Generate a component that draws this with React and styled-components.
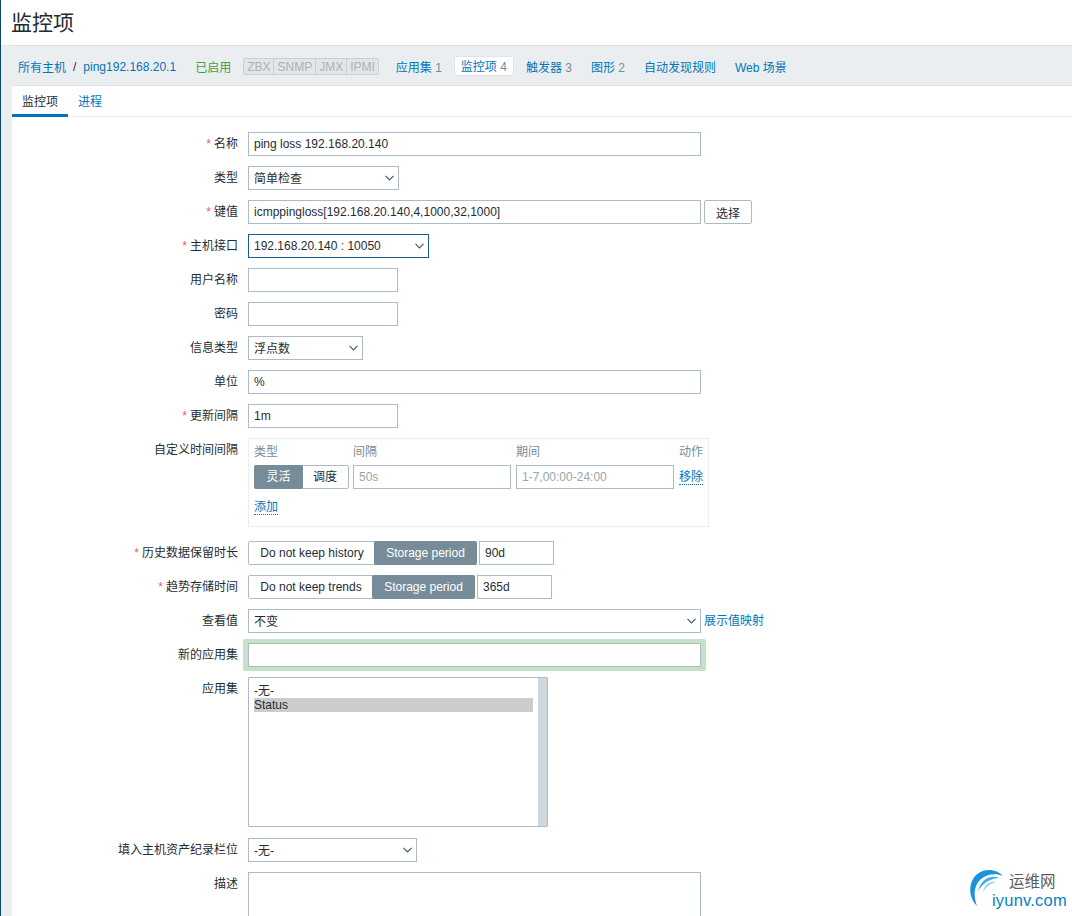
import React from "react";
import styled, { createGlobalStyle } from "styled-components";

const Global = createGlobalStyle`
  html, body { margin: 0; padding: 0; background: #fff; }
  body { font-family: "Liberation Sans", "Noto Sans CJK SC", sans-serif; font-size: 12px; color: #1f2c33; }
  * { box-sizing: border-box; }
`;

const Page = styled.div`
  position: relative;
  width: 1072px;
  height: 916px;
  overflow: hidden;
  background: #ebeef0;
  border-left: 1px solid #0a466a;
  display: flex;
  flex-direction: column;
`;
const Header = styled.header`
  height: 46px;
  flex: none;
  background: #fff;
  border-bottom: 1px solid #dfe4e7;
  padding: 10px 0 0 10px;
`;
const Title = styled.h1`
  margin: 0;
  font-size: 21px;
  font-weight: 400;
  line-height: 26px;
  color: #1f2c33;
`;
const NavBar = styled.nav`
  height: 39px;
  flex: none;
  display: flex;
  align-items: center;
  padding: 2px 0 0 17px;
  white-space: nowrap;
`;
const NavLink = styled.a`
  color: #0275b8;
`;
const Sep = styled.span`
  color: #1f2c33;
  margin: 0 7px;
`;
const Enabled = styled.span`
  color: #429e47;
  margin-left: 19px;
`;
const Badges = styled.div`
  display: flex;
  height: 17px;
  margin-left: 12px;
  border: 1px solid #c9d0d4;
  border-radius: 2px;
  background: #e2e6e8;
`;
const Badge = styled.span`
  padding: 0 3px;
  line-height: 17px;
  color: #a9b2b7;
  border-left: ${(p) => (p.$first ? "none" : "1px solid #c9d0d4")};
`;
const Count = styled.span`
  color: #768d99;
`;
const NavItem = styled.span`
  margin-left: ${(p) => p.$ml}px;
  color: #0275b8;
  ${(p) =>
    p.$active &&
    `background:#fff;border:1px solid #dfe4e7;border-radius:2px;height:20px;margin-top:-1px;line-height:20px;padding:0 6px;`}
`;
const Card = styled.main`
  flex: 1;
  margin-left: 11px;
  background: #fff;
  border-top: 1px solid #dfe4e7;
  min-height: 0;
`;
const Tabs = styled.div`
  display: flex;
  height: 31px;
  border-bottom: 1px solid #ebeef0;
`;
const Tab = styled.a`
  height: 31px;
  padding: 6px 10px 0;
  color: ${(p) => (p.$active ? "#1f2c33" : "#0275b8")};
  border-bottom: ${(p) => (p.$active ? "3px solid #0275b8" : "none")};
`;
const Form = styled.form`
  display: flex;
  flex-direction: column;
  gap: 10px;
  padding-top: 15px;
`;
const Row = styled.div`
  display: grid;
  grid-template-columns: 226px 1fr;
  column-gap: 10px;
  min-height: 24px;
`;
const Label = styled.label`
  text-align: right;
  line-height: 24px;
  color: #1f2c33;
  white-space: nowrap;
`;
const Star = styled.span`
  color: #e8635f;
  margin-right: 3px;
`;
const Control = styled.div`
  display: flex;
  align-items: flex-start;
  gap: ${(p) => p.$gap ?? 3}px;
`;
const Input = styled.div`
  width: ${(p) => p.$w}px;
  height: ${(p) => p.$h || 24}px;
  flex: none;
  border: 1px solid #acbbc7;
  background: #fff;
  padding: 0 5px;
  line-height: 22px;
  color: ${(p) => (p.$muted ? "#9aa5ab" : "#1f2c33")};
`;
const Select = styled.div`
  width: ${(p) => p.$w}px;
  height: 24px;
  flex: none;
  border: 1px solid ${(p) => (p.$focus ? "#1b5f8e" : "#acbbc7")};
  background: #fff;
  padding: 0 5px;
  line-height: 22px;
  display: flex;
  justify-content: space-between;
  align-items: center;
`;
const SelectText = styled.span`
  padding-top: ${(p) => (p.$low ? 2 : 0)}px;
`;
const Chevron = styled.svg`
  width: 9px;
  height: 6px;
  margin-right: -1px;
  fill: none;
  stroke: #4a5a62;
  stroke-width: 1.2;
`;
const Button = styled.button`
  height: 24px;
  width: 48px;
  font: inherit;
  color: #1f2c33;
  background: #fff;
  border: 1px solid #acbbc7;
  border-radius: 2px;
  padding: 0;
`;
const Toggle = styled.div`
  display: flex;
  flex: none;
  justify-self: start;
  height: 24px;
  border: 1px solid #acbbc7;
  border-radius: 2px;
  background: #fff;
`;
const ToggleOption = styled.span`
  width: ${(p) => p.$w}px;
  margin: ${(p) => (p.$on ? "-1px" : "0")};
  line-height: ${(p) => (p.$on ? 24 : 22)}px;
  text-align: center;
  background: ${(p) => (p.$on ? "#768d99" : "transparent")};
  color: ${(p) => (p.$on ? "#fff" : "#1f2c33")};
  border-radius: ${(p) => (p.$on ? "2px" : "0")};
`;
const IntervalBox = styled.div`
  width: 461px;
  height: 89px;
  margin-bottom: 4px;
  border: 1px solid #ebeef0;
  padding: 5px;
`;
const IntervalGrid = styled.div`
  display: grid;
  grid-template-columns: 94px 158px 158px 24px;
  column-gap: 5px;
  row-gap: 4px;
  align-items: center;
`;
const ColHead = styled.span`
  color: #768d99;
  line-height: 17px;
`;
const DottedLink = styled.a`
  color: #0275b8;
  border-bottom: 1px dotted #0275b8;
  line-height: 14px;
  display: inline-block;
`;
const AddRow = styled.div`
  margin-top: 11px;
`;
const MapLink = styled.a`
  color: #0275b8;
  line-height: 24px;
`;
const Highlight = styled.div`
  width: 463px;
  height: 32px;
  margin: -4px 0 -4px -5px;
  padding: 4px 5px;
  background: #c5e1c6;
  border-radius: 2px;
`;
const ListBox = styled.div`
  position: relative;
  width: 300px;
  height: 150px;
  margin-bottom: 1px;
  border: 1px solid #acbbc7;
  border-radius: 1px;
  padding: 5px 14px 0 5px;
  background: #fff;
`;
const ListScroll = styled.div`
  position: absolute;
  top: 0;
  right: 0;
  bottom: 0;
  width: 9px;
  background: #cfd8de;
`;
const ListOption = styled.div`
  height: 14px;
  line-height: 14px;
  margin-top: ${(p) => (p.$first ? "1px" : "0")};
  background: ${(p) => (p.$sel ? "#cccccc" : "transparent")};
`;
const Watermark = styled.div`
  position: absolute;
  left: 967px;
  top: 868px;
  width: 105px;
  height: 48px;
`;
const WatermarkIcon = styled.svg`
  position: absolute;
  left: 0;
  top: 0;
  width: 44px;
  height: 44px;
`;
const WatermarkCn = styled.span`
  position: absolute;
  left: 41px;
  top: 5px;
  font-size: 15.5px;
  line-height: 18px;
  color: #5c5c5c;
`;
const WatermarkEn = styled.span`
  position: absolute;
  left: 24px;
  top: 23px;
  font-size: 16.5px;
  line-height: 18px;
  letter-spacing: 0.2px;
  color: #0a7fc4;
`;

const Sel = ({ w, focus, low, children }) => (
  <Select $w={w} $focus={focus}>
    <SelectText $low={low}>{children}</SelectText>
    <Chevron viewBox="0 0 9 6">
      <path d="M0.5 0.8 L4.5 4.8 L8.5 0.8" />
    </Chevron>
  </Select>
);

const Field = ({ label, req, children, gap }) => (
  <Row>
    <Label>
      {req && <Star>*</Star>}
      {label}
    </Label>
    <Control $gap={gap}>{children}</Control>
  </Row>
);

export default function App() {
  return (
    <Page>
      <Global />
      <Header>
        <Title>监控项</Title>
      </Header>
      <NavBar>
        <NavLink>所有主机</NavLink>
        <Sep>/</Sep>
        <NavLink>ping192.168.20.1</NavLink>
        <Enabled>已启用</Enabled>
        <Badges>
          <Badge $first>ZBX</Badge>
          <Badge>SNMP</Badge>
          <Badge>JMX</Badge>
          <Badge>IPMI</Badge>
        </Badges>
        <NavItem $ml={17}>
          应用集 <Count>1</Count>
        </NavItem>
        <NavItem $ml={12} $active>
          监控项 <Count>4</Count>
        </NavItem>
        <NavItem $ml={12}>
          触发器 <Count>3</Count>
        </NavItem>
        <NavItem $ml={19}>
          图形 <Count>2</Count>
        </NavItem>
        <NavItem $ml={19}>自动发现规则</NavItem>
        <NavItem $ml={19}>Web 场景</NavItem>
      </NavBar>
      <Card>
        <Tabs>
          <Tab $active>监控项</Tab>
          <Tab>进程</Tab>
        </Tabs>
        <Form>
          <Field label="名称" req>
            <Input $w={453}>ping loss 192.168.20.140</Input>
          </Field>
          <Field label="类型">
            <Sel w={151} low>简单检查</Sel>
          </Field>
          <Field label="键值" req>
            <Input $w={453}>icmppingloss[192.168.20.140,4,1000,32,1000]</Input>
            <Button type="button">选择</Button>
          </Field>
          <Field label="主机接口" req>
            <Sel w={181} focus>
              192.168.20.140 : 10050
            </Sel>
          </Field>
          <Field label="用户名称">
            <Input $w={150} />
          </Field>
          <Field label="密码">
            <Input $w={150} />
          </Field>
          <Field label="信息类型">
            <Sel w={115} low>浮点数</Sel>
          </Field>
          <Field label="单位">
            <Input $w={453}>%</Input>
          </Field>
          <Field label="更新间隔" req>
            <Input $w={150}>1m</Input>
          </Field>
          <Field label="自定义时间间隔">
            <IntervalBox>
              <IntervalGrid>
                <ColHead>类型</ColHead>
                <ColHead>间隔</ColHead>
                <ColHead>期间</ColHead>
                <ColHead>动作</ColHead>
                <Toggle>
                  <ToggleOption $w={49} $on>
                    灵活
                  </ToggleOption>
                  <ToggleOption $w={46}>调度</ToggleOption>
                </Toggle>
                <Input $w={158} $muted>
                  50s
                </Input>
                <Input $w={158} $muted>
                  1-7,00:00-24:00
                </Input>
                <span>
                  <DottedLink>移除</DottedLink>
                </span>
              </IntervalGrid>
              <AddRow>
                <DottedLink>添加</DottedLink>
              </AddRow>
            </IntervalBox>
          </Field>
          <Field label="历史数据保留时长" req gap={2}>
            <Toggle>
              <ToggleOption $w={126}>Do not keep history</ToggleOption>
              <ToggleOption $w={103} $on>
                Storage period
              </ToggleOption>
            </Toggle>
            <Input $w={75}>90d</Input>
          </Field>
          <Field label="趋势存储时间" req gap={2}>
            <Toggle>
              <ToggleOption $w={124}>Do not keep trends</ToggleOption>
              <ToggleOption $w={103} $on>
                Storage period
              </ToggleOption>
            </Toggle>
            <Input $w={75}>365d</Input>
          </Field>
          <Field label="查看值">
            <Sel w={453} low>不变</Sel>
            <MapLink>展示值映射</MapLink>
          </Field>
          <Field label="新的应用集">
            <Highlight>
              <Input $w={453} />
            </Highlight>
          </Field>
          <Field label="应用集">
            <ListBox>
              <ListOption $first>-无-</ListOption>
              <ListOption $sel>Status</ListOption>
              <ListScroll />
            </ListBox>
          </Field>
          <Field label="填入主机资产纪录栏位">
            <Sel w={169} low>-无-</Sel>
          </Field>
          <Field label="描述">
            <Input $w={453} $h={60} />
          </Field>
        </Form>
      </Card>
      <Watermark>
        <WatermarkIcon viewBox="0 0 44 44">
          <path d="M35 8 C28 0 12 -1 5 11 C0 20 2 31 9 38 C5 28 6 17 13 11 C19 6 28 5 35 8 Z" fill="#1a93d8" />
          <path d="M31 10 C22 6 12 12 10 24 C14 15 22 11 31 10 Z" fill="#4aaee6" />
          <path d="M28 14 C22 13 16 17 15 24 C18 18 23 15 28 14 Z" fill="#86c9ef" />
        </WatermarkIcon>
        <WatermarkCn>运维网</WatermarkCn>
        <WatermarkEn>iyunv.com</WatermarkEn>
      </Watermark>
    </Page>
  );
}
